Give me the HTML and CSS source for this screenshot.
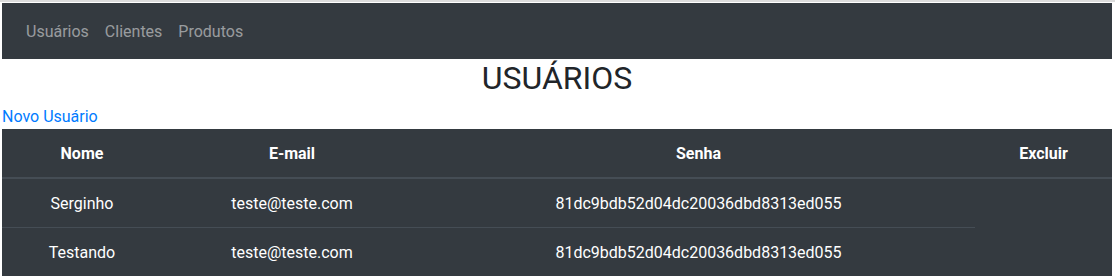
FILE: index.html
```html
<!DOCTYPE html>
<html lang="pt-BR">
<head>
    <meta charset="UTF-8">
    <meta name="viewport" content="width=device-width, initial-scale=1.0">
    <title>Usuários</title>
    <link rel="stylesheet" href="styles.css">
</head>
<body>
    <nav class="navbar">
        <a class="nav-link" href="#">Usuários</a>
        <a class="nav-link" href="#">Clientes</a>
        <a class="nav-link" href="#">Produtos</a>
    </nav>

    <h2 class="title">USUÁRIOS</h2>
    <a class="new-link" href="#">Novo Usuário</a>

    <table class="table-dark">
        <colgroup>
            <col class="col-nome">
            <col class="col-email">
            <col class="col-senha">
            <col class="col-excluir">
        </colgroup>
        <thead>
            <tr>
                <th>Nome</th>
                <th>E-mail</th>
                <th>Senha</th>
                <th>Excluir</th>
            </tr>
        </thead>
        <tbody>
            <tr>
                <td>Serginho</td>
                <td>teste@teste.com</td>
                <td>81dc9bdb52d04dc20036dbd8313ed055</td>
            </tr>
            <tr>
                <td>Testando</td>
                <td>teste@teste.com</td>
                <td>81dc9bdb52d04dc20036dbd8313ed055</td>
            </tr>
        </tbody>
    </table>
</body>
</html>
```

FILE: styles.css
```css
body {
    font-family: "Segoe UI", Roboto, "Liberation Sans", sans-serif;
    font-size: 16px;
    line-height: 1.5;
    color: #212529;
    background: #fff;
    margin: 0;
    padding: 1px 3px 0 2px;
    border-top: 2px solid #dcdcdc;
}
.navbar {
    display: flex;
    background: #343a40;
    padding: 8px 16px;
}
.nav-link {
    color: rgba(255, 255, 255, 0.5);
    text-decoration: none;
    padding: 9px 8px 7px;
}
.title {
    margin: 0 0 8px;
    text-align: center;
    font-size: 32px;
    font-weight: 400;
    line-height: 1.2;
}
.new-link {
    display: block;
    color: #007bff;
    text-decoration: none;
}
.table-dark {
    width: 100%;
    border-collapse: collapse;
    table-layout: fixed;
    background: #343a40;
    color: #fff;
    text-align: center;
}
.col-nome { width: 160px; }
.col-email { width: 260px; }
.col-excluir { width: 137px; }
.table-dark th,
.table-dark td {
    padding: 13px 12px 11px;
    vertical-align: top;
}
.table-dark th {
    font-weight: bold;
    border-bottom: 2px solid #454d55;
}
.table-dark tbody td {
    border-top: 1px solid #454d55;
}
```
